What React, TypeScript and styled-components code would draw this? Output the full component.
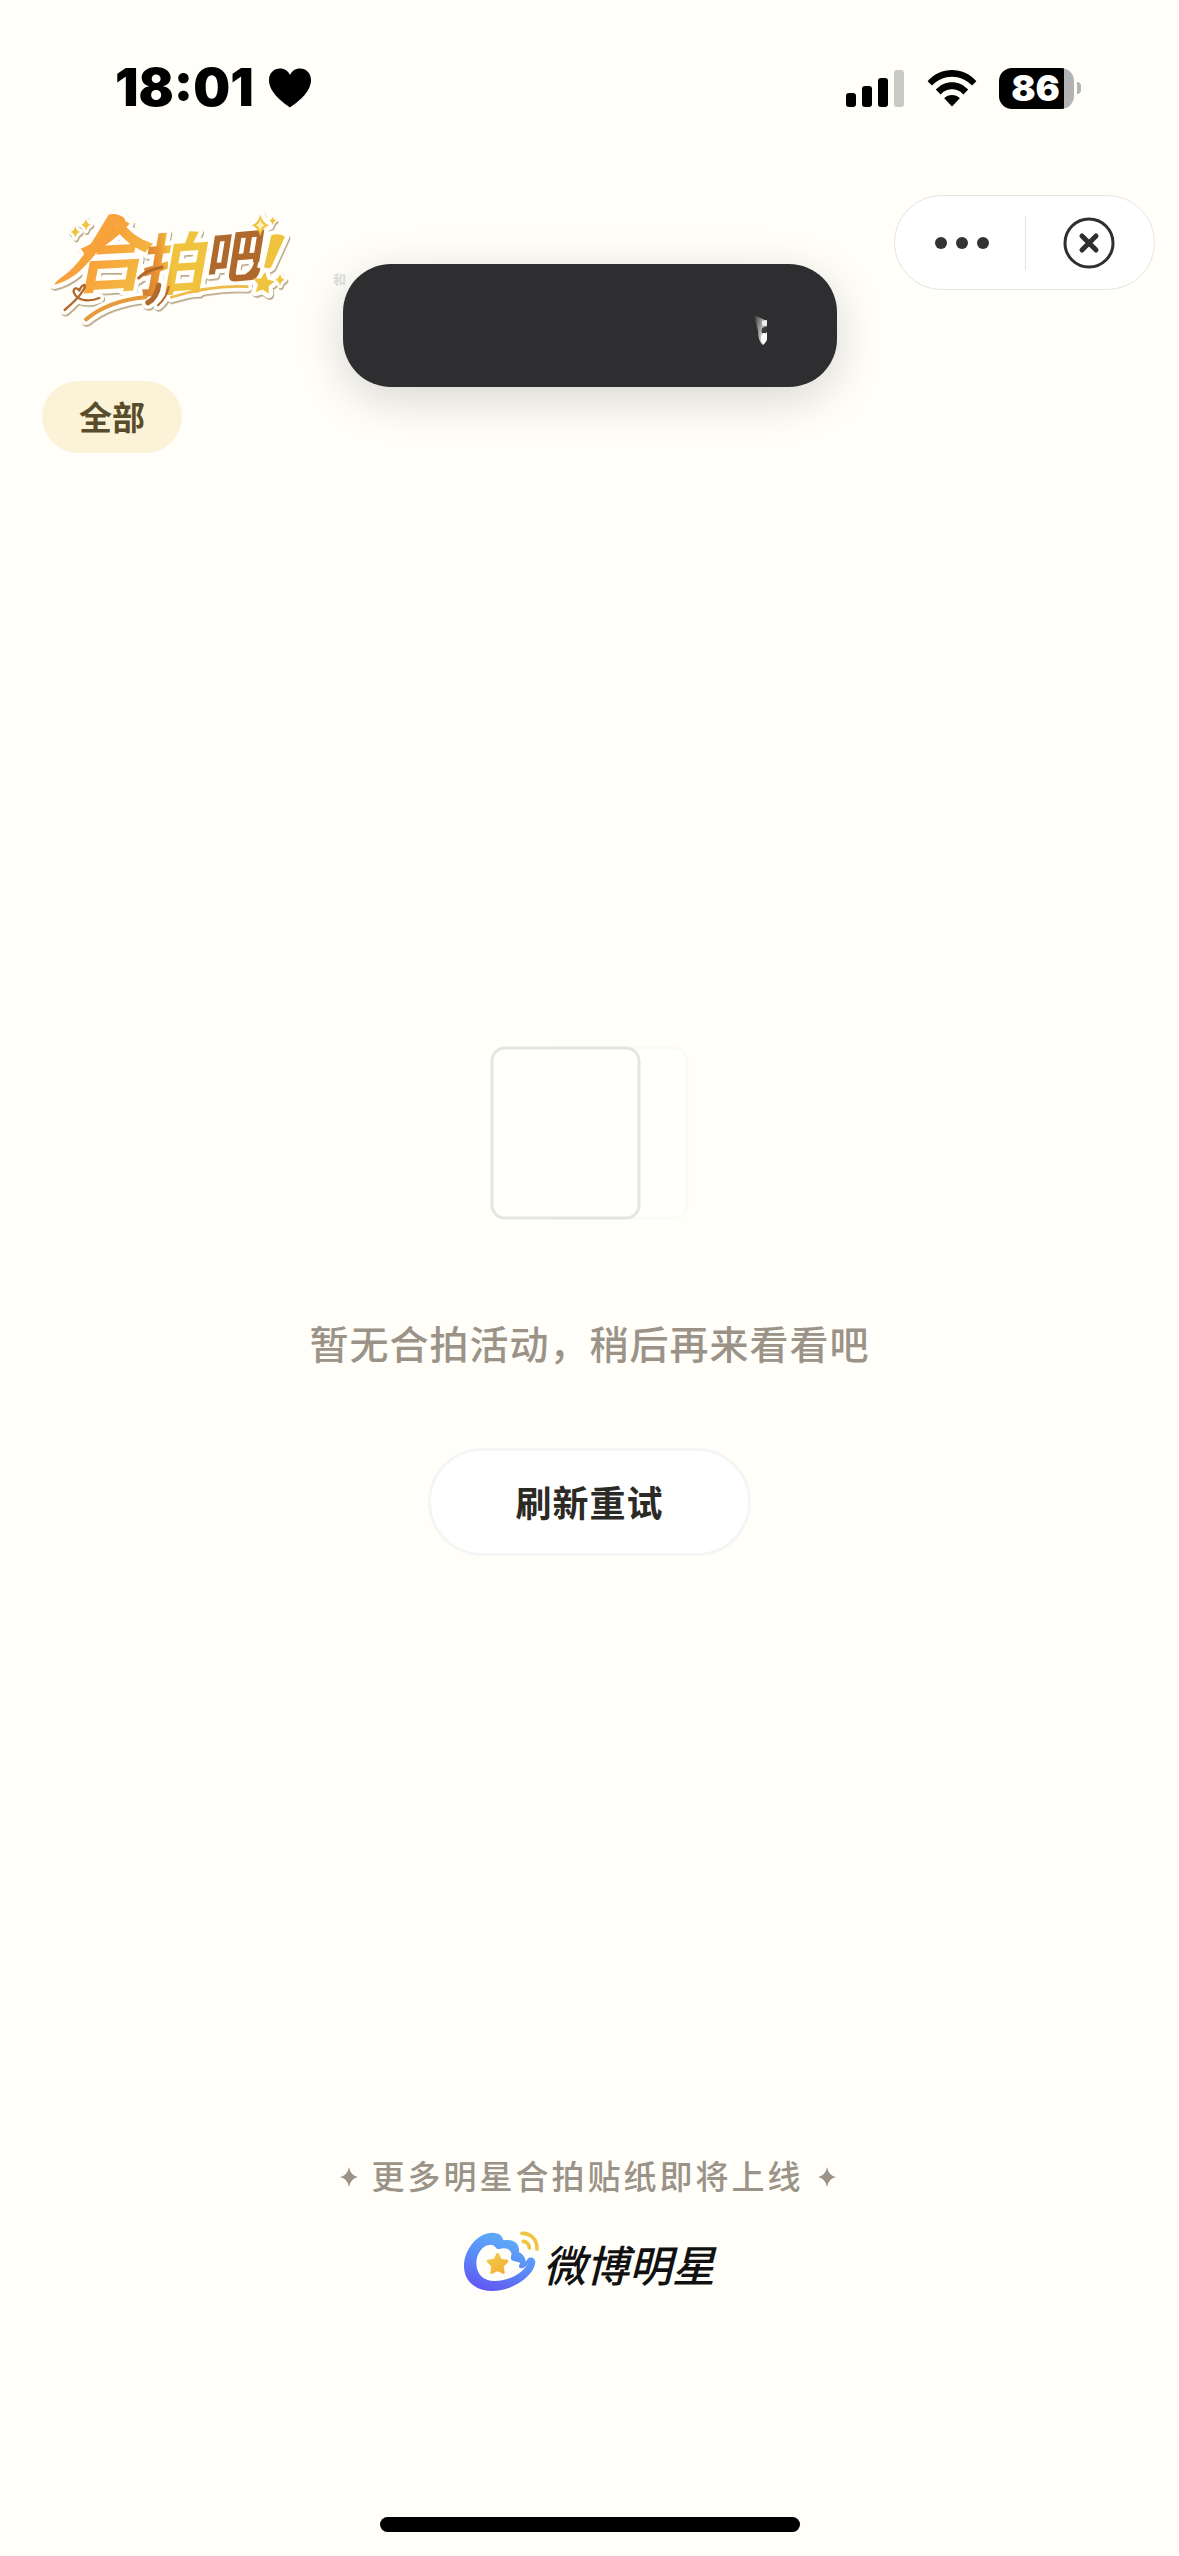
import styled, { createGlobalStyle } from "styled-components";

const GlobalStyle = createGlobalStyle`
    *{
        box-sizing: border-box;
    }
    body{
        margin: 0;
        background-color: #fffef9;
        font-family: "Noto Sans CJK SC", "Noto Sans", sans-serif;
    }
    button{
        border: none;
        padding: 0;
        font-family: inherit;
        cursor: pointer;
    }
    svg{
        display: block;
        overflow: visible;
    }
`

const Page = styled.div`
    position: relative;
    min-height: 100vh;
    display: flex;
    flex-direction: column;
    background-color: #fffef9;
`

const StatusBar = styled.div`
    height: 195px;
    padding: 58px 98px 0 115px;
    display: flex;
    justify-content: space-between;
    align-items: flex-start;
`

const StatusGroup = styled.div<{ $gap: number }>`
    height: 60px;
    display: flex;
    align-items: center;
    gap: ${({ $gap }) => $gap}px;
`

const Time = styled.span`
    font-family: Inter, sans-serif;
    font-size: 52px;
    font-weight: 900;
    line-height: 60px;
    color: #000;
`

const Battery = styled.div`
    display: flex;
    align-items: center;
    gap: 3px;
`

const BatteryBody = styled.div`
    width: 75px;
    height: 41px;
    border-radius: 13px;
    background: linear-gradient(to right, #000 65px, #b3b3b3 65px);
    color: #fff;
    font-family: Inter, sans-serif;
    font-size: 36px;
    font-weight: 900;
    line-height: 41px;
    text-align: center;
    padding-right: 2px;
`

const BatteryTip = styled.div`
    width: 4px;
    height: 12px;
    border-radius: 0 4px 4px 0;
    background-color: #b3b3b3;
`

const Header = styled.header`
    display: flex;
    justify-content: space-between;
    align-items: flex-start;
    padding: 0 24px 0 30px;
`

const Title = styled.h1`
    margin: 0;
`

const Capsule = styled.div`
    width: 261px;
    height: 95px;
    display: flex;
    align-items: center;
    padding: 0 2px 0 4px;
    border: 1px solid #e4e4e2;
    border-radius: 48px;
    background-color: #fff;
`

const CapsuleButton = styled.button`
    flex: 1;
    height: 93px;
    display: flex;
    align-items: center;
    justify-content: center;
    background: none;
`

const Divider = styled.div`
    width: 1px;
    height: 54px;
    background-color: #e2e2e2;
`

const Tabs = styled.nav`
    display: flex;
    padding: 36px 42px 0;
`

const Tab = styled.button`
    height: 72px;
    padding: 0 37px 2px;
    border-radius: 36px;
    background-color: #fcf2d7;
    color: #584c2b;
    font-size: 33px;
    font-weight: 700;
    line-height: 48px;
`

const Toast = styled.div`
    position: absolute;
    top: 264px;
    left: 50%;
    width: 494px;
    height: 123px;
    transform: translateX(-50%);
    display: flex;
    align-items: center;
    justify-content: flex-end;
    padding: 8px 69px 0 0;
    border-radius: 48px;
    background-color: #2e2e30;
    box-shadow: 0 12px 48px rgba(0, 0, 0, 0.16);
`

const Hint = styled.span`
    position: absolute;
    top: 271px;
    left: 333px;
    font-size: 13px;
    font-weight: 700;
    line-height: 16px;
    color: #dededb;
`

const Empty = styled.main`
    flex: 1;
    display: flex;
    flex-direction: column;
    align-items: center;
    justify-content: center;
`

const Message = styled.p`
    margin: 93px 0 77px;
    font-size: 39px;
    font-weight: 500;
    line-height: 58px;
    letter-spacing: 1px;
    color: #9b9387;
`

const Retry = styled.button`
    height: 108px;
    padding: 0 84px 3px;
    border: 3px solid #f5f5f5;
    border-radius: 54px;
    background-color: #fff;
    color: #2c2a24;
    font-size: 36px;
    font-weight: 700;
    line-height: 54px;
    letter-spacing: 1px;
`

const Footer = styled.footer`
    display: flex;
    flex-direction: column;
    align-items: center;
    gap: 30px;
    padding-bottom: 225px;
`

const Slogan = styled.div`
    height: 52px;
    display: flex;
    align-items: center;
    gap: 14px;
    padding-right: 4px;
    color: #9b9387;
    font-size: 33px;
    font-weight: 500;
    line-height: 48px;
    letter-spacing: 3px;
    svg{
        margin-top: 4px;
    }
`

const Brand = styled.div`
    height: 61px;
    display: flex;
    align-items: flex-start;
    gap: 3px;
    color: #111;
    font-size: 43px;
    font-style: italic;
    font-weight: 500;
    line-height: 64px;
`

const HomeBar = styled.div`
    width: 420px;
    height: 15px;
    margin: 0 auto 24px;
    border-radius: 8px;
    background-color: #000;
`

const STAR = "M0 -33 L10 -12 L32 -9 L16 7 L20 30 L0 20 L-20 30 L-16 7 L-32 -9 L-10 -12 Z"
const SPARK = "M0 -30 Q5 -6 24 0 Q5 6 0 30 Q-5 6 -24 0 Q-5 -6 0 -30 Z"

const glyphs = [
    { char: "合", x: 232, y: 200, size: 228, turn: -3, fill: "url(#amber)" },
    { char: "拍", x: 420, y: 222, size: 200, turn: -4, fill: "url(#mixed)" },
    { char: "吧", x: 602, y: 198, size: 170, turn: -5, fill: "#b0692c" },
]

const lines = [
    { d: "M104 360 C130 338 150 318 160 300 C174 276 154 284 148 302 C138 286 122 300 138 318 C150 332 180 336 208 324", color: "#b0692c", width: 7 },
    { d: "M168 388 C220 346 280 328 346 322", color: "#e59a3c", width: 12 },
    { d: "M424 322 C500 298 570 286 652 290", color: "#eebb48", width: 8 },
    { d: "M326 264 C346 244 372 236 396 232", color: "#b0692c", width: 9 },
    { d: "M416 290 C412 314 400 332 384 346", color: "#b0692c", width: 6 },
    { d: "M386 286 C382 312 372 328 354 338", color: "#b0692c", width: 16 },
    { d: "M652 256 C668 246 678 230 680 208", color: "#b0692c", width: 13 },
]

const sparks = [
    { x: 136, y: 126, size: 0.6 },
    { x: 168, y: 104, size: 0.6 },
    { x: 691, y: 106, size: 1.1 },
    { x: 728, y: 92, size: 0.4 },
    { x: 750, y: 269, size: 0.6 },
]

// backing draws the same shapes fattened, as the sticker edge
function LogoArt({ backing }: { backing?: boolean }){
    const edge = backing ? { stroke: "#fffefa", strokeWidth: 26 } : {}
    return(
        <g strokeLinejoin="round" strokeLinecap="round" aria-hidden={backing}>
            {glyphs.map(({ char, x, y, size, turn, fill }) => (
                <text
                    key={char}
                    x={x}
                    y={y + size * 0.38}
                    fontSize={size}
                    fontWeight={700}
                    fontStyle="italic"
                    textAnchor="middle"
                    transform={`rotate(${turn} ${x} ${y})`}
                    fill={backing ? "#fffefa" : fill}
                    {...edge}
                >
                    {char}
                </text>
            ))}
            <path
                d="M236 74 C254 68 280 76 286 90 C286 98 272 100 262 104 C222 160 186 210 146 246 C122 266 96 280 72 284 C84 266 108 256 130 232 C172 188 204 124 236 74 Z"
                fill={backing ? "#fffefa" : "#f8a23b"}
                {...edge}
            />
            <g fill={backing ? "#fffefa" : "#f0c33f"} {...edge}>
                <path d="M724 136 Q744 128 765 140 L724 230 Q717 238 702 232 Z" />
                <path d={STAR} transform="translate(701 279) rotate(8)" />
                {sparks.map(({ x, y, size }) => (
                    <path key={x} d={SPARK} transform={`translate(${x} ${y}) scale(${size})`} />
                ))}
            </g>
            {!backing && <path d={SPARK} fill="#fdf0b8" transform="translate(691 106) scale(0.6)" />}
            {lines.map(({ d, color, width }) => (
                <path
                    key={d}
                    d={d}
                    fill="none"
                    stroke={backing ? "#fffefa" : color}
                    strokeWidth={backing ? width + 22 : width}
                />
            ))}
        </g>
    )
}

function Logo(){
    return(
        <svg width="290" height="150" viewBox="0 15 870 450">
            <defs>
                <linearGradient id="amber" x1="0" y1="0" x2="1" y2="1">
                    <stop offset="0.4" stopColor="#f8a03a" />
                    <stop offset="1" stopColor="#f2c746" />
                </linearGradient>
                <linearGradient id="mixed" x1="0" y1="0" x2="1" y2="0">
                    <stop offset="0" stopColor="#c87a30" />
                    <stop offset="0.3" stopColor="#eb9434" />
                    <stop offset="0.48" stopColor="#f0c33f" />
                </linearGradient>
                <filter id="lift" x="-10%" y="-10%" width="120%" height="120%">
                    <feDropShadow dx="3" dy="5" stdDeviation="2" floodColor="#a8916a" floodOpacity="0.8" />
                </filter>
            </defs>
            <g filter="url(#lift)">
                <LogoArt backing />
            </g>
            <LogoArt />
        </svg>
    )
}

function BrandIcon(){
    return(
        <svg width="76" height="61" viewBox="42 36 228 183">
            <defs>
                <linearGradient id="cloud" x1="0.7" y1="0" x2="0.3" y2="1">
                    <stop offset="0" stopColor="#5fb2f8" />
                    <stop offset="0.5" stopColor="#5a8df8" />
                    <stop offset="1" stopColor="#6257f2" />
                </linearGradient>
                <linearGradient id="gold" x1="0" y1="0" x2="1" y2="1">
                    <stop offset="0" stopColor="#f0cb46" />
                    <stop offset="1" stopColor="#f5ab38" />
                </linearGradient>
            </defs>
            <path
                fill="url(#cloud)"
                fillRule="evenodd"
                d="M128 41 C148 41 158 52 160 64 C190 58 210 72 207 100 C220 106 226 116 227 128 C230 124 233 121 234 118 C244 112 256 118 256 130 C252 172 186 216 128 216 C76 216 42 186 42 142 C42 90 84 41 128 41 Z M122 77 C98 77 79 104 79 132 C79 165 100 186 134 186 C175 186 222 164 238 126 C232 138 226 146 216 148 C204 148 206 140 211 132 C202 128 192 128 186 124 C178 118 186 110 184 102 C178 86 160 86 148 90 C136 92 138 77 122 77 Z"
            />
            <g fill="none" stroke="#efc344" strokeWidth="11" strokeLinecap="round">
                <path d="M216 43 C242 42 262 62 261 90" />
                <path d="M220 67 C230 68 238 76 238 87" />
            </g>
            <path
                d="M143 106 L151 123 L171 126 L157 141 L160 161 L143 152 L125 161 L128 141 L114 126 L134 123 Z"
                fill="url(#gold)"
                stroke="url(#gold)"
                strokeWidth="8"
                strokeLinejoin="round"
            />
        </svg>
    )
}

function Spark(){
    return(
        <svg width="18" height="20" viewBox="0 0 18 20">
            <path d="M9 0 Q10.500 8.500 18 10 Q10.500 11.500 9 20 Q7.500 11.500 0 10 Q7.500 8.500 9 0 Z" fill="#9b9387" />
        </svg>
    )
}

function Status(){
    return(
        <StatusBar>
            <StatusGroup $gap={15}>
                <Time>18:01</Time>
                <svg width="42" height="40" viewBox="0 0 42 40">
                    <path d="M21 39.500 C15 35 0 25 0 12 C0 5 5 0.500 11 0.500 C16 0.500 19 3 21 7 C23 3 26 0.500 31 0.500 C37 0.500 42 5 42 12 C42 25 27 35 21 39.500 Z" />
                </svg>
            </StatusGroup>
            <StatusGroup $gap={22}>
                <svg width="59" height="38" viewBox="0 0 59 38">
                    <rect y="24" width="10" height="14" rx="3" />
                    <rect x="16" y="17" width="10" height="21" rx="3" />
                    <rect x="32" y="9" width="10" height="29" rx="3" />
                    <rect x="48" y="1" width="10" height="37" rx="3" fill="#c9c9c7" />
                </svg>
                <svg width="50" height="38" viewBox="0 0 50 38">
                    <path d="M0.600 12.200 C14 -2.600 36 -2.600 49.400 12.200 L45 16.600 C34 4.800 16 4.800 5 16.600 Z" />
                    <path d="M8.800 20.600 C18 10.800 32 10.800 41.200 20.600 L36.400 25.400 C30 18.600 20 18.600 13.600 25.400 Z" />
                    <path d="M17.200 29.200 C21.600 25 28.400 25 32.800 29.200 L25 37.600 Z" />
                </svg>
                <Battery>
                    <BatteryBody>86</BatteryBody>
                    <BatteryTip />
                </Battery>
            </StatusGroup>
        </StatusBar>
    )
}

export default function App(){
    return(
        <Page>
            <GlobalStyle />
            <Status />
            <Header>
                <Title aria-label="合拍吧!">
                    <Logo />
                </Title>
                <Capsule>
                    <CapsuleButton aria-label="更多">
                        <svg width="54" height="12" viewBox="0 0 54 12" fill="#333">
                            <circle cx="6" cy="6" r="6" />
                            <circle cx="27" cy="6" r="6" />
                            <circle cx="48" cy="6" r="6" />
                        </svg>
                    </CapsuleButton>
                    <Divider />
                    <CapsuleButton aria-label="关闭">
                        <svg width="52" height="52" viewBox="0 0 52 52" fill="none" stroke="#2f2f2f">
                            <circle cx="26" cy="26" r="24" strokeWidth="3" />
                            <path d="M19 19 L33 33 M33 19 L19 33" strokeWidth="5" strokeLinecap="round" />
                        </svg>
                    </CapsuleButton>
                </Capsule>
            </Header>
            <Tabs>
                <Tab>全部</Tab>
            </Tabs>
            <Hint>和</Hint>
            <Toast role="status">
                <svg width="14" height="30" viewBox="0 0 14 30">
                    <defs>
                        <linearGradient id="glint" x1="0" y1="0" x2="1" y2="0.600">
                            <stop offset="0" stopColor="#2e2e30" />
                            <stop offset="0.45" stopColor="#8c8c8d" />
                            <stop offset="1" stopColor="#fff" />
                        </linearGradient>
                    </defs>
                    <path d="M0 0 L13 6 L13 22 Q12 28 9 30 Q4 26 4 16 Z" fill="url(#glint)" />
                    <path d="M13 11 Q6 12 8 18 Q11 20 13 17 Z" fill="#3a3a3c" />
                    <path d="M8 6 L13 5 L13 10 Q10 11 8 10 Z" fill="#ececec" />
                    <ellipse cx="10" cy="23" rx="3" ry="5" fill="#fff" />
                </svg>
            </Toast>
            <Empty>
                <svg width="200" height="174" viewBox="0 0 200 174" fill="#fffffe">
                    <rect x="50" y="2" width="147" height="170" rx="13" stroke="#fafaf7" strokeWidth="3" />
                    <rect x="2" y="2" width="147" height="170" rx="13" stroke="#e4e4e1" strokeWidth="3" />
                </svg>
                <Message>暂无合拍活动，稍后再来看看吧</Message>
                <Retry>刷新重试</Retry>
            </Empty>
            <Footer>
                <Slogan>
                    <Spark />
                    <span>更多明星合拍贴纸即将上线</span>
                    <Spark />
                </Slogan>
                <Brand>
                    <BrandIcon />
                    <span>微博明星</span>
                </Brand>
            </Footer>
            <HomeBar />
        </Page>
    )
}
